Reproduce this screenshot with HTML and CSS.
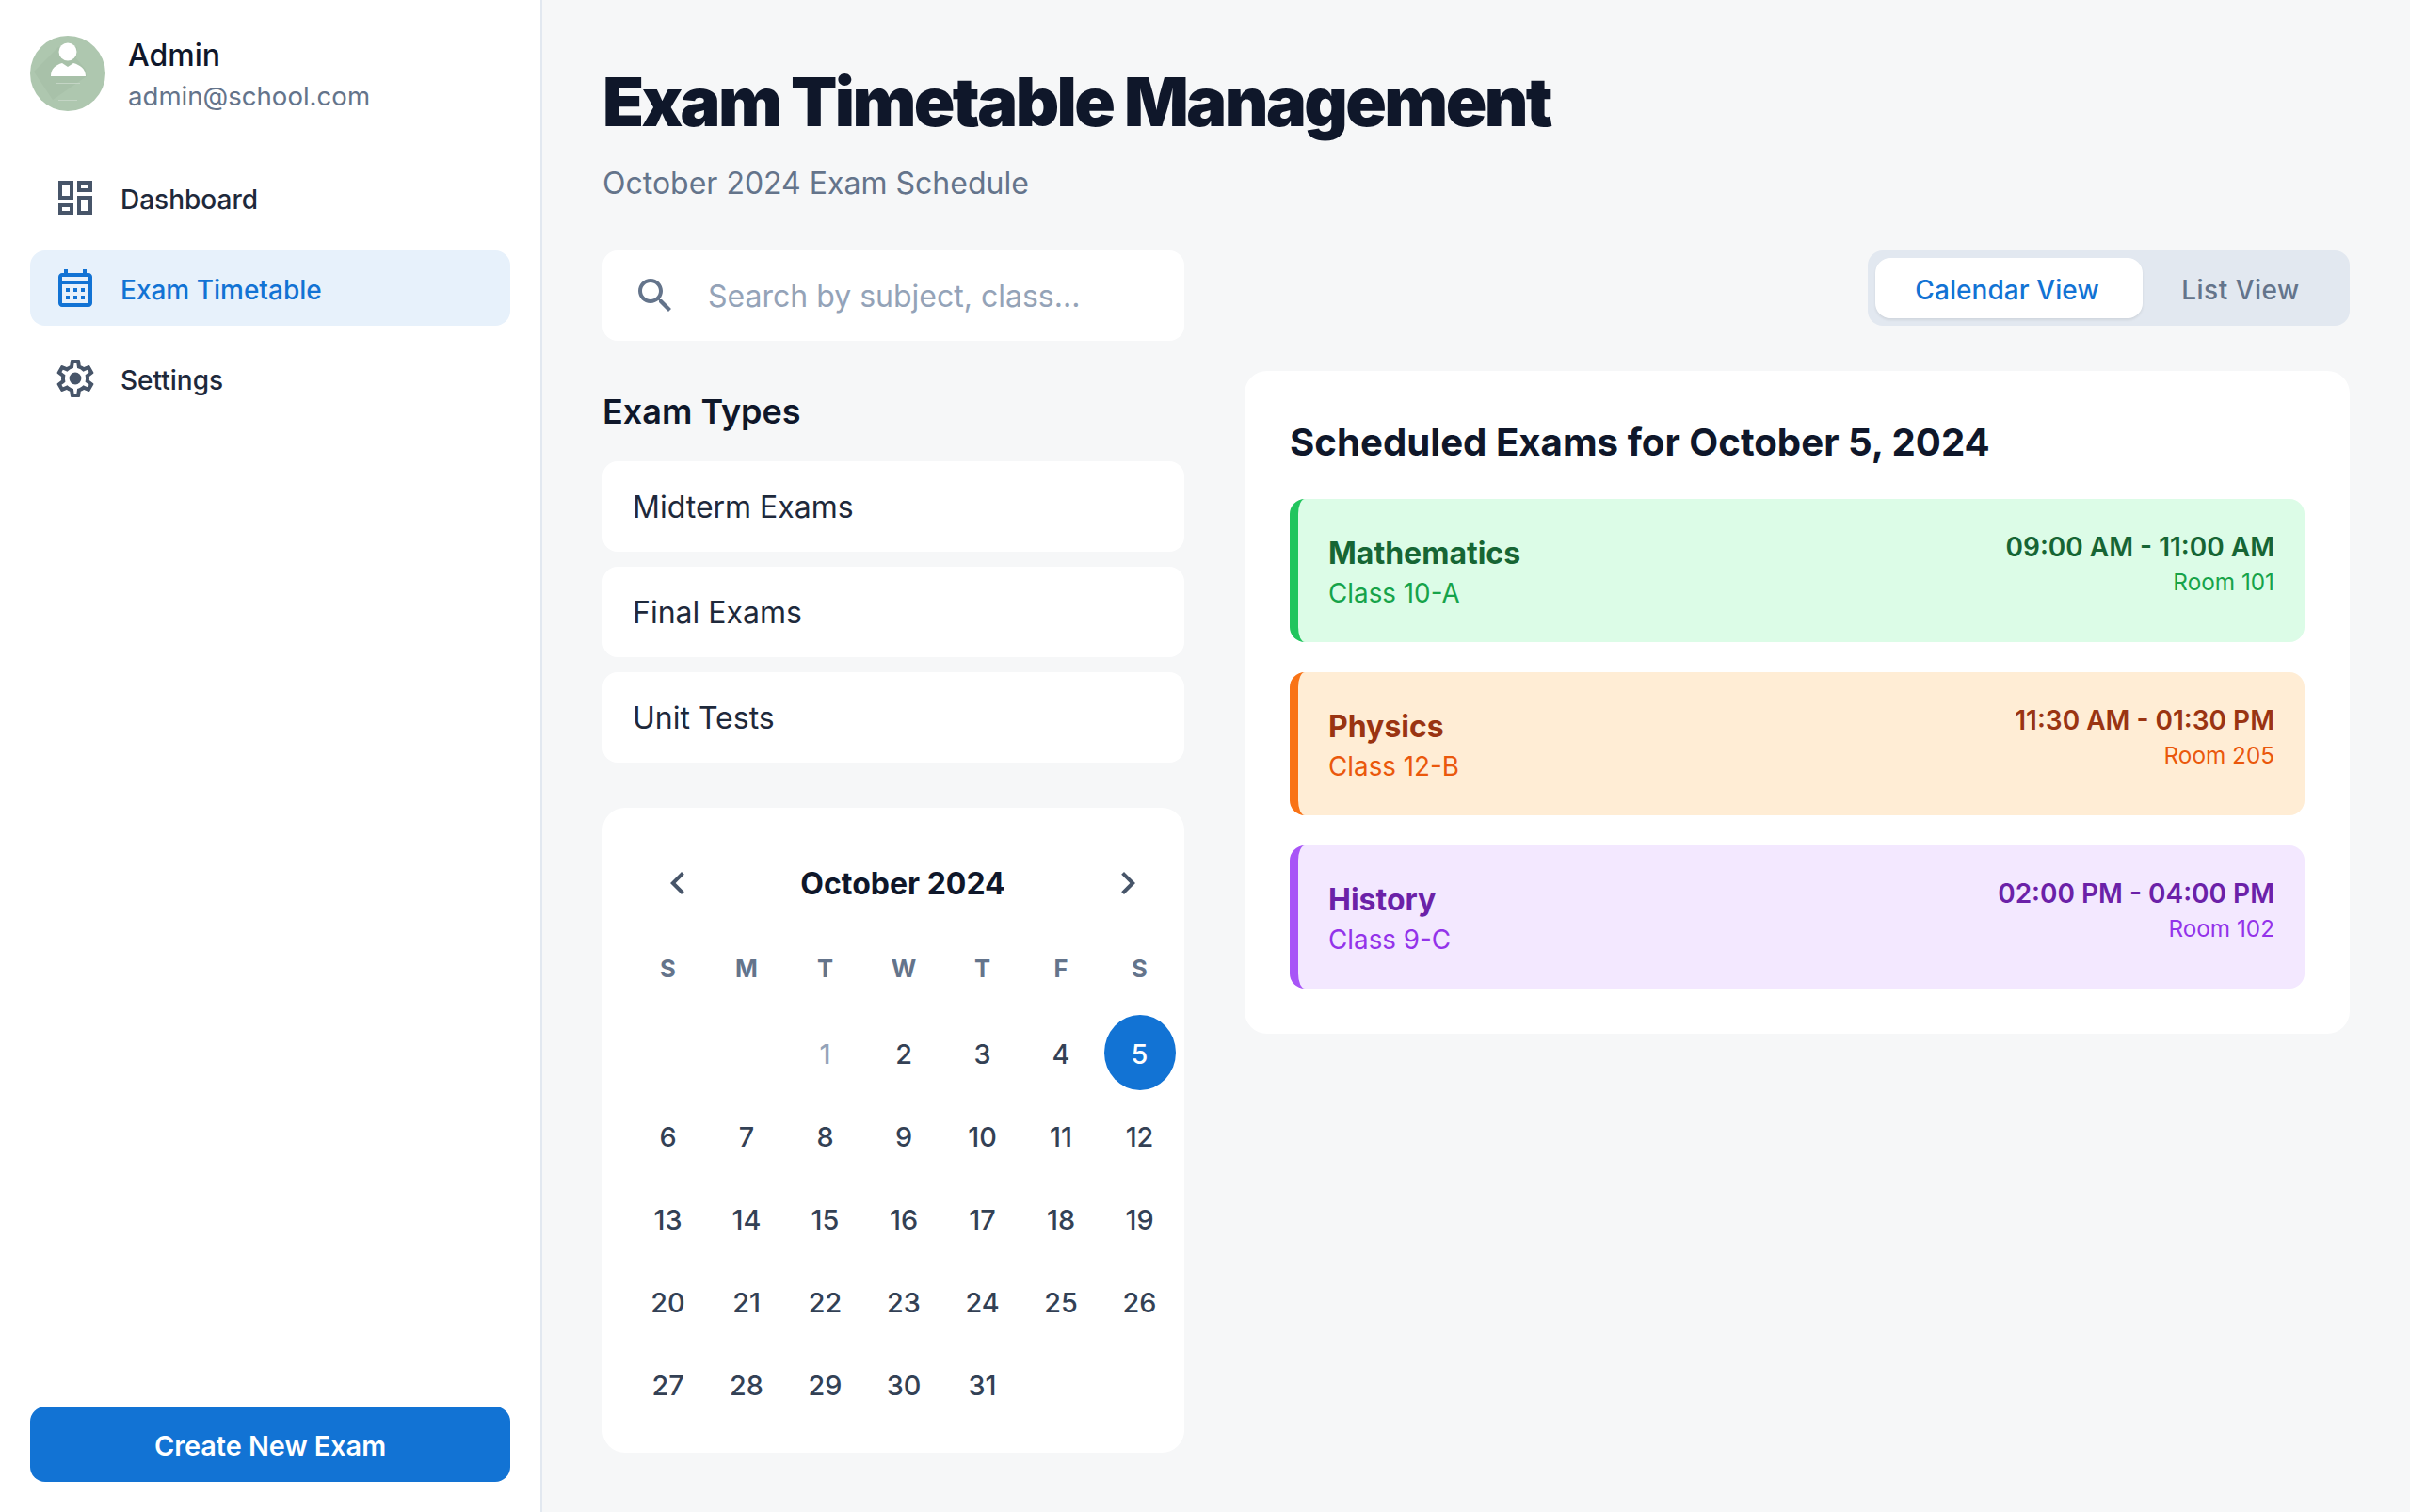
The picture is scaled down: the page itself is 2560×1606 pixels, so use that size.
FILE: index.html
```html
<!DOCTYPE html>
<html lang="en">
<head>
    <meta charset="UTF-8">
    <meta name="viewport" content="width=device-width, initial-scale=1.0">
    <title>Exam Timetable Management</title>
    <link rel="stylesheet" href="styles.css">
</head>
<body>
    <div class="app">
        <aside class="sidebar">
            <div class="profile">
                <svg class="avatar" viewBox="0 0 80 80">
                    <circle cx="40" cy="40" r="40" fill="#aec7af"/>
                    <path d="M30 12 L4 38 L24 68 L60 43 L59 36 L49 24 L50 12 Z" fill="#a8c1a9"/>
                    <circle cx="40" cy="17" r="9.5" fill="#fff"/>
                    <path d="M22 43 C22 35 27 31 34 29 L40 33 L46 29 C53 31 59 35 59 43 Z" fill="#fff"/>
                    <rect x="27" y="50" width="26" height="1" fill="#c4d5c5"/>
                    <rect x="25" y="55" width="30" height="1" fill="#c4d5c5"/>
                    <rect x="30" y="68" width="20" height="1" fill="#c4d5c5"/>
                </svg>
                <div class="profile-text">
                    <div class="profile-name">Admin</div>
                    <div class="profile-email">admin@school.com</div>
                </div>
            </div>

            <nav class="nav">
                <a class="nav-item">
                    <svg class="icon" viewBox="0 0 24 24"><path d="M19 5v2h-4V5h4M9 5v6H5V5h4m10 8v6h-4v-6h4M9 17v2H5v-2h4M21 3h-8v6h8V3zM11 3H3v10h8V3zm10 8h-8v10h8V11zm-10 4H3v6h8v-6z"/></svg>
                    <span>Dashboard</span>
                </a>
                <a class="nav-item active">
                    <svg class="icon" viewBox="0 0 24 24"><path d="M19 4h-1V2h-2v2H8V2H6v2H5c-1.11 0-1.99.9-1.99 2L3 20c0 1.1.89 2 2 2h14c1.1 0 2-.9 2-2V6c0-1.1-.9-2-2-2zm0 16H5V10h14v10zm0-12H5V6h14v2zM9 14H7v-2h2v2zm4 0h-2v-2h2v2zm4 0h-2v-2h2v2zm-8 4H7v-2h2v2zm4 0h-2v-2h2v2zm4 0h-2v-2h2v2z"/></svg>
                    <span>Exam Timetable</span>
                </a>
                <a class="nav-item">
                    <svg class="icon" viewBox="0 0 24 24"><path d="M19.43 12.98c.04-.32.07-.64.07-.98 0-.34-.03-.66-.07-.98l2.11-1.65c.19-.15.24-.42.12-.64l-2-3.46c-.09-.16-.26-.25-.44-.25-.06 0-.12.01-.17.03l-2.49 1c-.52-.4-1.08-.73-1.69-.98l-.38-2.65C14.46 2.18 14.25 2 14 2h-4c-.25 0-.46.18-.49.42l-.38 2.65c-.61.25-1.17.59-1.69.98l-2.49-1c-.06-.02-.12-.03-.18-.03-.17 0-.34.09-.43.25l-2 3.46c-.13.22-.07.49.12.64l2.11 1.65c-.04.32-.07.65-.07.98 0 .33.03.66.07.98l-2.11 1.65c-.19.15-.24.42-.12.64l2 3.46c.09.16.26.25.44.25.06 0 .12-.01.17-.03l2.49-1c.52.4 1.08.73 1.69.98l.38 2.65c.03.24.24.42.49.42h4c.25 0 .46-.18.49-.42l.38-2.65c.61-.25 1.17-.59 1.69-.98l2.49 1c.06.02.12.03.18.03.17 0 .34-.09.43-.25l2-3.46c.12-.22.07-.49-.12-.64l-2.11-1.65zm-1.98-1.71c.04.31.05.52.05.73 0 .21-.02.43-.05.73l-.14 1.13.89.7 1.08.84-.7 1.21-1.27-.51-1.04-.42-.9.68c-.43.32-.84.56-1.25.73l-1.06.43-.16 1.13-.2 1.35h-1.4l-.19-1.35-.16-1.13-1.06-.43c-.43-.18-.83-.41-1.23-.71l-.91-.7-1.06.43-1.27.51-.7-1.21 1.08-.84.89-.7-.14-1.13c-.03-.31-.05-.54-.05-.74s.02-.43.05-.73l.14-1.13-.89-.7-1.08-.84.7-1.21 1.27.51 1.04.42.9-.68c.43-.32.84-.56 1.25-.73l1.06-.43.16-1.13.2-1.35h1.39l.19 1.35.16 1.13 1.06.43c.43.18.83.41 1.23.71l.91.7 1.06-.43 1.27-.51.7 1.21-1.07.85-.89.7.14 1.13z"/><circle cx="12" cy="12" r="3.2"/></svg>
                    <span>Settings</span>
                </a>
            </nav>

            <button class="create-btn">Create New Exam</button>
        </aside>

        <main class="main">
            <h1 class="page-title">Exam Timetable Management</h1>
            <p class="page-subtitle">October 2024 Exam Schedule</p>

            <div class="columns">
                <section class="left-col">
                    <div class="search">
                        <svg class="icon" viewBox="0 0 24 24"><path d="M15.5 14h-.79l-.28-.27C15.41 12.59 16 11.11 16 9.5 16 5.91 13.09 3 9.5 3S3 5.91 3 9.5 5.91 16 9.5 16c1.61 0 3.09-.59 4.23-1.57l.27.28v.79l5 4.99L20.49 19l-4.99-5zm-6 0C7.01 14 5 11.99 5 9.5S7.01 5 9.5 5 14 7.01 14 9.5 11.99 14 9.5 14z"/></svg>
                        <span>Search by subject, class...</span>
                    </div>

                    <h2 class="types-title">Exam Types</h2>
                    <div class="types">
                        <div class="type-item">Midterm Exams</div>
                        <div class="type-item">Final Exams</div>
                        <div class="type-item">Unit Tests</div>
                    </div>

                    <div class="calendar">
                        <div class="cal-head">
                            <div class="cal-nav"><svg class="icon" viewBox="0 0 24 24"><path d="M15.41 7.41 14 6l-6 6 6 6 1.41-1.41L10.83 12z"/></svg></div>
                            <div class="cal-month">October 2024</div>
                            <div class="cal-nav"><svg class="icon" viewBox="0 0 24 24"><path d="M10 6 8.59 7.41 13.17 12l-4.58 4.59L10 18l6-6z"/></svg></div>
                        </div>
                        <div class="cal-grid">
                            <div class="cal-dow">S</div>
                            <div class="cal-dow">M</div>
                            <div class="cal-dow">T</div>
                            <div class="cal-dow">W</div>
                            <div class="cal-dow">T</div>
                            <div class="cal-dow">F</div>
                            <div class="cal-dow">S</div>
                            <div></div>
                            <div></div>
                            <div class="cal-day muted">1</div>
                            <div class="cal-day">2</div>
                            <div class="cal-day">3</div>
                            <div class="cal-day">4</div>
                            <div class="cal-day selected">5</div>
                            <div class="cal-day">6</div>
                            <div class="cal-day">7</div>
                            <div class="cal-day">8</div>
                            <div class="cal-day">9</div>
                            <div class="cal-day">10</div>
                            <div class="cal-day">11</div>
                            <div class="cal-day">12</div>
                            <div class="cal-day">13</div>
                            <div class="cal-day">14</div>
                            <div class="cal-day">15</div>
                            <div class="cal-day">16</div>
                            <div class="cal-day">17</div>
                            <div class="cal-day">18</div>
                            <div class="cal-day">19</div>
                            <div class="cal-day">20</div>
                            <div class="cal-day">21</div>
                            <div class="cal-day">22</div>
                            <div class="cal-day">23</div>
                            <div class="cal-day">24</div>
                            <div class="cal-day">25</div>
                            <div class="cal-day">26</div>
                            <div class="cal-day">27</div>
                            <div class="cal-day">28</div>
                            <div class="cal-day">29</div>
                            <div class="cal-day">30</div>
                            <div class="cal-day">31</div>
                        </div>
                    </div>
                </section>

                <section class="right-col">
                    <div class="toggle">
                        <div class="toggle-btn active">Calendar View</div>
                        <div class="toggle-btn">List View</div>
                    </div>

                    <div class="panel">
                        <h2 class="panel-title">Scheduled Exams for October 5, 2024</h2>
                        <div class="exam green">
                            <div class="exam-left">
                                <div class="exam-name">Mathematics</div>
                                <div class="exam-class">Class 10-A</div>
                            </div>
                            <div class="exam-right">
                                <div class="exam-time">09:00 AM - 11:00 AM</div>
                                <div class="exam-room">Room 101</div>
                            </div>
                        </div>
                        <div class="exam orange">
                            <div class="exam-left">
                                <div class="exam-name">Physics</div>
                                <div class="exam-class">Class 12-B</div>
                            </div>
                            <div class="exam-right">
                                <div class="exam-time">11:30 AM - 01:30 PM</div>
                                <div class="exam-room">Room 205</div>
                            </div>
                        </div>
                        <div class="exam purple">
                            <div class="exam-left">
                                <div class="exam-name">History</div>
                                <div class="exam-class">Class 9-C</div>
                            </div>
                            <div class="exam-right">
                                <div class="exam-time">02:00 PM - 04:00 PM</div>
                                <div class="exam-room">Room 102</div>
                            </div>
                        </div>
                    </div>
                </section>
            </div>
        </main>
    </div>
</body>
</html>
```

FILE: styles.css
```css
* {
    box-sizing: border-box;
}

body {
    margin: 0;
    background-color: #f6f7f8;
    color: #0f172a;
    font-family: Inter, "Noto Sans", sans-serif;
}

.app {
    display: flex;
    height: 1606px;
    overflow: hidden;
}

.icon {
    width: 48px;
    height: 48px;
    flex-shrink: 0;
    fill: currentColor;
}

/* Sidebar */
.sidebar {
    display: flex;
    flex-direction: column;
    width: 576px;
    padding: 32px;
    background-color: #fff;
    border-right: 2px solid #e2e8f0;
}

.profile {
    display: flex;
    align-items: center;
    gap: 24px;
    height: 86px;
    padding-top: 6px;
    margin-bottom: 52px;
}

.avatar {
    width: 80px;
    height: 80px;
    flex-shrink: 0;
}

.profile-name {
    font-size: 32px;
    font-weight: 500;
    line-height: 48px;
}

.profile-email {
    font-size: 27.6px;
    line-height: 38px;
    color: #64748b;
}

.nav {
    display: flex;
    flex-direction: column;
    gap: 16px;
}

.nav-item {
    display: flex;
    align-items: center;
    gap: 24px;
    height: 80px;
    padding: 0 24px;
    border-radius: 16px;
    color: #475569;
    font-size: 28px;
    font-weight: 500;
}

.nav-item span {
    padding-top: 3px;
    color: #1e293b;
}

.nav-item.active {
    background-color: #e7f1fb;
    color: #1273d4;
}

.nav-item.active span {
    color: #1273d4;
}

.create-btn {
    height: 80px;
    margin-top: auto;
    padding-top: 4px;
    border: none;
    border-radius: 16px;
    background-color: #1273d4;
    color: #fff;
    font-family: inherit;
    font-size: 28.8px;
    font-weight: 600;
}

/* Main */
.main {
    flex: 1;
    padding: 64px;
}

.page-title {
    margin: 0;
    font-size: 72px;
    font-weight: 900;
    line-height: 88px;
    letter-spacing: -2.6px;
}

.page-subtitle {
    margin: 19px 0 0;
    font-size: 32px;
    line-height: 48px;
    color: #64748b;
}

.columns {
    display: flex;
    gap: 64px;
    margin-top: 47px;
}

.left-col {
    width: 618px;
    flex-shrink: 0;
}

.search {
    display: flex;
    align-items: center;
    gap: 32px;
    height: 96px;
    padding-left: 32px;
    border-radius: 16px;
    background-color: #fff;
    color: #64748b;
    font-size: 32px;
}

.search span {
    color: #94a3b8;
}

.types-title {
    margin: 51px 0 29px;
    font-size: 36px;
    font-weight: 600;
    line-height: 48px;
}

.types {
    display: flex;
    flex-direction: column;
    gap: 16px;
}

.type-item {
    display: flex;
    align-items: center;
    height: 96px;
    padding-left: 32px;
    border-radius: 16px;
    background-color: #fff;
    font-size: 32px;
    color: #1e293b;
}

.calendar {
    margin-top: 48px;
    padding: 32px;
    height: 685px;
    border-radius: 24px;
    background-color: #fff;
}

.cal-head {
    display: flex;
    align-items: center;
    justify-content: space-between;
    width: 574px;
    height: 96px;
}

.cal-nav {
    display: flex;
    padding: 24px;
    color: #475569;
}

.cal-month {
    font-size: 32px;
    font-weight: 700;
}

.cal-grid {
    display: grid;
    grid-template-columns: repeat(7, 76px);
    grid-template-rows: 84px;
    grid-auto-rows: 80px;
    column-gap: 7.5px;
    row-gap: 8px;
    margin-left: -0.5px;
}

.cal-dow {
    display: flex;
    align-items: center;
    justify-content: center;
    font-size: 25.6px;
    font-weight: 700;
    color: #64748b;
}

.cal-day {
    display: flex;
    align-items: center;
    justify-content: center;
    padding-top: 3px;
    border-radius: 50%;
    font-size: 28.8px;
    font-weight: 450;
    color: #334155;
}

.cal-day.muted {
    color: #94a3b8;
}

.cal-day.selected {
    background-color: #1273d4;
    color: #fff;
}

/* Right column */
.right-col {
    flex: 1;
    display: flex;
    flex-direction: column;
    gap: 48px;
}

.toggle {
    display: flex;
    align-self: flex-end;
    width: 512px;
    height: 80px;
    padding: 8px;
    border-radius: 16px;
    background-color: #e2e8f0;
}

.toggle-btn {
    display: flex;
    align-items: center;
    justify-content: center;
    width: 212px;
    padding: 4px 4px 0 0;
    border-radius: 16px;
    color: #64748b;
    font-size: 28px;
    font-weight: 500;
    letter-spacing: 0.5px;
}

.toggle-btn.active {
    width: 284px;
    background-color: #fff;
    color: #1273d4;
    letter-spacing: 0.08px;
    box-shadow: 0 2px 3px rgba(0, 0, 0, 0.08);
}

.panel {
    padding: 48px;
    border-radius: 24px;
    background-color: #fff;
}

.panel-title {
    margin: 0 0 32px;
    font-size: 40.2px;
    font-weight: 700;
    line-height: 56px;
}

.exam {
    display: flex;
    align-items: center;
    justify-content: space-between;
    height: 152px;
    margin-bottom: 32px;
    padding: 0 32px;
    border-left: 9.6px solid;
    border-radius: 16px;
}

.exam:last-child {
    margin-bottom: 0;
}

.exam-left {
    padding-top: 3px;
}

.exam-right {
    padding-bottom: 16px;
    text-align: right;
}

.exam-name {
    font-size: 32px;
    font-weight: 700;
    line-height: 45px;
}

.exam-class {
    font-size: 27.8px;
    line-height: 41px;
}

.exam-time {
    font-size: 28px;
    font-weight: 600;
    line-height: 40px;
}

.exam-room {
    font-size: 24.3px;
    line-height: 34px;
}

.green {
    background-color: #dcfce7;
    border-color: #22c55e;
}

.green .exam-name,
.green .exam-time {
    color: #166534;
}

.green .exam-class,
.green .exam-room {
    color: #16a34a;
}

.orange {
    background-color: #ffedd5;
    border-color: #f97316;
}

.orange .exam-name,
.orange .exam-time {
    color: #9a3412;
}

.orange .exam-class,
.orange .exam-room {
    color: #ea580c;
}

.purple {
    background-color: #f3e8ff;
    border-color: #a855f7;
}

.purple .exam-name,
.purple .exam-time {
    color: #6b21a8;
}

.purple .exam-class,
.purple .exam-room {
    color: #9333ea;
}
```
